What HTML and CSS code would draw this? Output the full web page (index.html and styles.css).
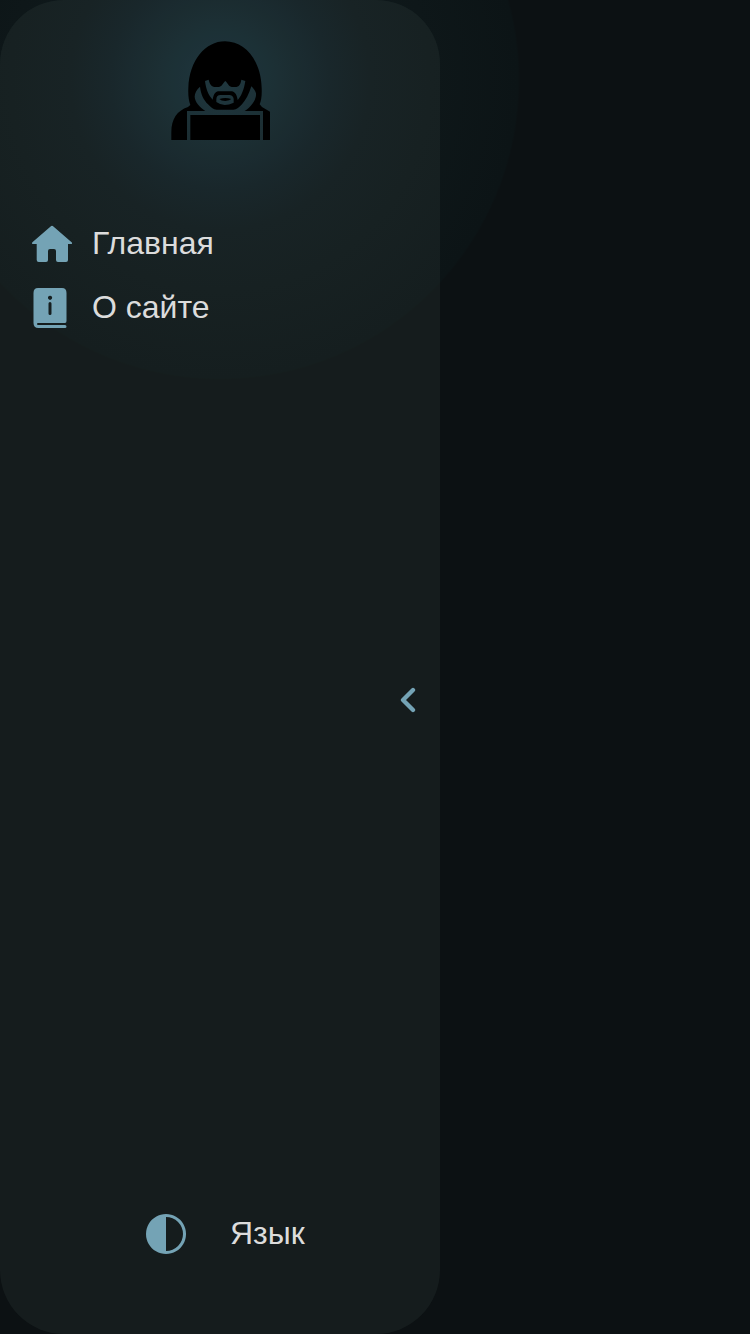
FILE: index.html
```html
<!DOCTYPE html>
<html lang="ru">
<head>
<meta charset="utf-8">
<title>Меню</title>
<link rel="stylesheet" href="styles.css">
</head>
<body>
<aside class="sidebar">
  <svg class="logo" viewBox="30 30 300 300" aria-hidden="true">
    <path fill-rule="evenodd" d="M34 330V307C34 267 51 242 84 231L91 225C86 210 84 196 85 174C88 91 136 34 195 34C255 34 303 91 305 174C306 196 304 211 299 223L306 231L330 245V330H309V243H254C275 230 290 207 288 190C286 181 280 175 274 169C267 193 257 210 246 223C238 232 230 239 220 239H170C160 239 152 232 144 223C131 209 123 195 120 170C110 178 104 190 104 200C105 217 119 231 136 243H81V330ZM135 153L146 149C149 162 154 171 167 171H176C185 171 189 159 196 153C203 159 207 171 216 171H225C238 171 242 162 244 149L256 153C252 181 242 201 233 210C231 196 226 186 215 184H175C164 185 160 197 158 209C145 195 138 178 135 153ZM169 208Q169 195 182 195H209Q221 197 221 208V218Q207 225 194 225Q180 224 169 216ZM178 207Q183 213 196 213Q209 212 214 207Q204 204 196 204Q188 204 178 207Z"/>
    <path d="M91 255H300V330H91Z"/>
  </svg>
  <nav class="menu">
    <a class="link">
      <svg class="icon" viewBox="0 0 40 40"><path d="M18.600 2.400Q20 1.200 21.400 2.400L39.600 18.200Q40.400 19 39.800 20H36V36Q36 38 34 38H26Q24 38 24 36V27Q24 25 22 25H18Q16 25 16 27V36Q16 38 14 38H6.700Q4.700 38 4.700 36V20H.3Q-.3 19 .4 18.200Z"/></svg>
      <span>Главная</span>
    </a>
    <a class="link">
      <svg class="icon" viewBox="0 0 40 40"><path fill-rule="evenodd" d="M6 0H30Q34.500 0 34.500 5V33Q34.500 35 33 35H6Q5 35 5 36Q5 37 6 37H33Q34.500 37 34.500 38.500Q34.500 40 33 40H6.500Q1.500 40 1.500 35V5Q1.500 0 6 0ZM18 7.700a2.100 2.100 0 1 0 .1 0ZM16.500 15.500V25.500a1.500 1.500 0 0 0 3 0V15.500a1.500 1.500 0 0 0-3 0Z"/></svg>
      <span>О сайте</span>
    </a>
  </nav>
  <svg class="collapse" viewBox="0 0 16 26"><path d="M13 3L3 13L13 23"/></svg>
  <footer class="tools">
    <svg class="icon" viewBox="0 0 40 40"><path fill-rule="evenodd" d="M20 0a20 20 0 1 0 .01 0ZM20 3a17 17 0 0 1 0 34Z"/></svg>
    <span>Язык</span>
  </footer>
</aside>
</body>
</html>
```
FILE: styles.css
```css
* { box-sizing: border-box; }
body {
  margin: 0;
  min-height: 100vh;
  display: flex;
  background: radial-gradient(circle 300px at 220px 80px, #182f37 0, #13252c 60px, #101d22 110px, #0f191c 150px, #0e1719 210px, #0c1416 298px, #0c1113 300px) #0c1113;
  color: #dcdcdc;
  font: 32px/40px "Liberation Sans", Arial, sans-serif;
}
.sidebar {
  width: 440px;
  height: 1334px;
  padding: 40px 24px 80px 32px;
  display: flex;
  flex-direction: column;
  border-radius: 64px;
  background: rgba(190, 240, 225, .05);
}
.logo { width: 100px; height: 100px; margin-left: 138px; flex: none; }
.menu { margin-top: 84px; display: flex; flex-direction: column; gap: 24px; }
.link { display: flex; align-items: center; gap: 20px; }
.link span, .tools span { position: relative; top: -1px; }
.icon { width: 40px; height: 40px; flex: none; fill: #74a3b5; }
.collapse {
  width: 16px;
  height: 26px;
  margin: auto 0;
  align-self: flex-end;
  position: relative;
  top: -71px;
  fill: none;
  stroke: #74a3b5;
  stroke-width: 4.3;
  stroke-linecap: round;
  stroke-linejoin: round;
}
.tools { display: flex; align-items: center; gap: 44px; margin-left: 114px; }
```
